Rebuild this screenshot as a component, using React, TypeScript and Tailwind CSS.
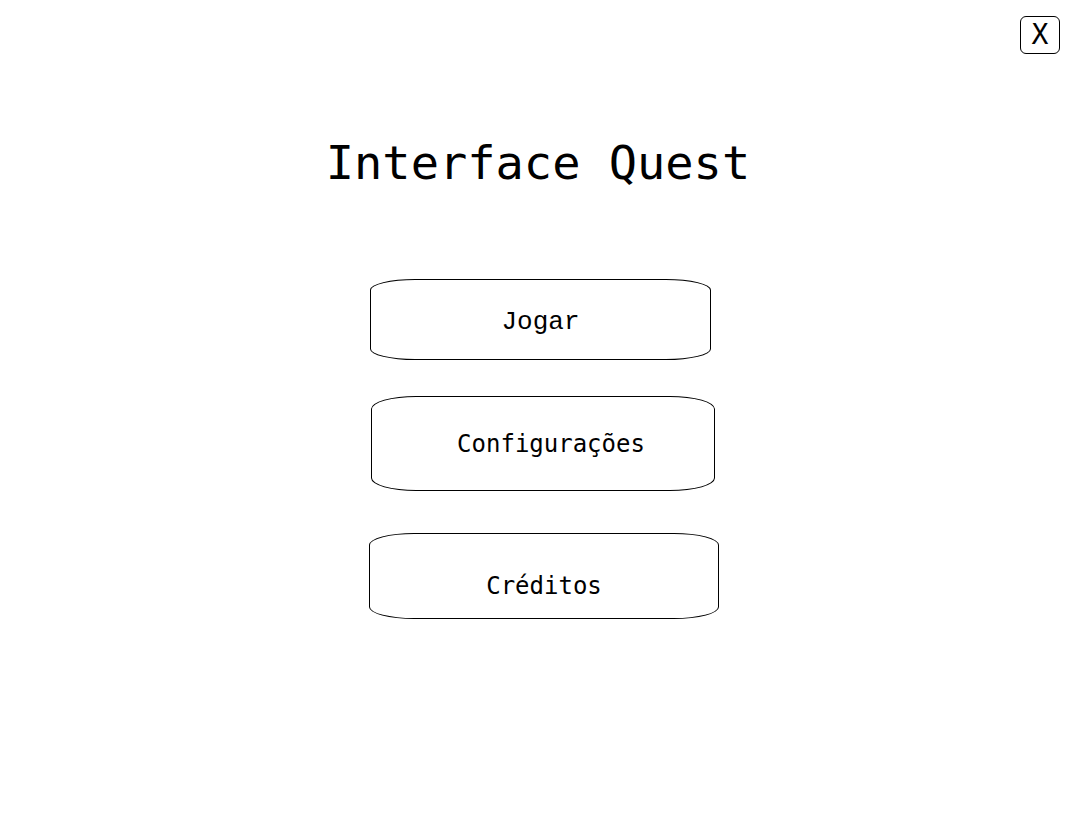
export default function App() {
  return (
    <div className="min-h-screen w-full bg-white text-black flex flex-col items-center relative">
      <button className="absolute top-[16px] right-[11px] w-[40px] h-[38px] border border-black rounded-[6px] flex items-center justify-center text-[28px] leading-none font-['DejaVu_Sans_Mono',monospace]">
        X
      </button>

      <h1 className="mt-[133px] ml-[5px] text-[47px] leading-[60px] font-normal font-['DejaVu_Sans_Mono',monospace]">
        Interface Quest
      </h1>

      <div className="mt-[86px] flex flex-col items-center">
        <button className="ml-[10px] w-[341px] h-[81px] border border-black rounded-[45px/11px] pt-[5px] text-[26px] font-normal font-['Liberation_Mono',monospace]">
          Jogar
        </button>
        <button className="mt-[36px] ml-[15px] w-[344px] h-[95px] border border-black rounded-[45px/13px] pl-[16px] text-[24px] font-normal font-['DejaVu_Sans_Mono',monospace]">
          Configurações
        </button>
        <button className="mt-[42px] ml-[17px] w-[350px] h-[86px] border border-black rounded-[45px/12px] pt-[20px] text-[24px] font-normal font-['DejaVu_Sans_Mono',monospace]">
          Créditos
        </button>
      </div>
    </div>
  );
}
